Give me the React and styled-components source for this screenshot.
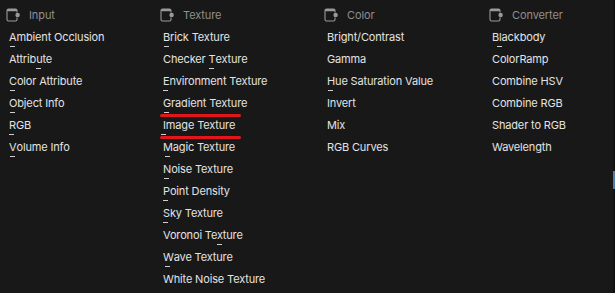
import React from "react";
import styled, { createGlobalStyle } from "styled-components";

const GlobalStyle = createGlobalStyle`
    html, body {
        margin: 0;
        padding: 0;
        background: #181818;
    }
    body {
        font-family: Inter, "DejaVu Sans", sans-serif;
        -webkit-font-smoothing: antialiased;
    }
`;

const columns = [
    {
        title: "Input",
        items: [
            ["Ambient Occlusion", 0],
            ["Attribute", 6],
            ["Color Attribute", 0],
            ["Object Info", 0],
            ["RGB", 0],
            ["Volume Info", 0],
        ],
    },
    {
        title: "Texture",
        items: [
            ["Brick Texture", 0],
            ["Checker Texture", 8],
            ["Environment Texture", 0],
            ["Gradient Texture", 0, true],
            ["Image Texture", 0, true],
            ["Magic Texture", 0],
            ["Noise Texture", 0],
            ["Point Density", 0],
            ["Sky Texture", 0],
            ["Voronoi Texture", 10],
            ["Wave Texture", 0],
            ["White Noise Texture", -1],
        ],
    },
    {
        title: "Color",
        items: [
            ["Bright/Contrast", -1],
            ["Gamma", -1],
            ["Hue Saturation Value", 0],
            ["Invert", -1],
            ["Mix", -1],
            ["RGB Curves", -1],
        ],
    },
    {
        title: "Converter",
        items: [
            ["Blackbody", 1],
            ["ColorRamp", -1],
            ["Combine HSV", -1],
            ["Combine RGB", -1],
            ["Shader to RGB", -1],
            ["Wavelength", -1],
        ],
    },
];

const CategoryIcon = () => (
    <svg width="15" height="14" viewBox="0 0 15 14">
        <path
            d="M11 4.6 V2.5 Q11 1 9.5 1 H2.5 Q1 1 1 2.5 V11.5 Q1 13 2.5 13 H9.5 Q11 13 11 11.5 V9.4"
            fill="none"
            stroke="#9a9a9a"
            strokeWidth="1.1"
        />
        <rect x="1" y="1" width="10" height="2.2" rx="1" fill="#9a9a9a" />
        <circle cx="11.6" cy="7" r="2.2" fill="#9a9a9a" />
    </svg>
);

const Label = ({ text, hotkey }) => {
    if (hotkey < 0) return text;
    return (
        <>
            {text.slice(0, hotkey)}
            <Hotkey>{text[hotkey]}</Hotkey>
            {text.slice(hotkey + 1)}
        </>
    );
};

const App = () => {
    return (
        <>
            <GlobalStyle />
            <Page>
                <Menu>
                    {columns.map((c) => (
                        <Column key={c.title}>
                            <Header>
                                <CategoryIcon />
                                <span>{c.title}</span>
                            </Header>
                            {c.items.map(([label, hotkey, marked]) => (
                                <Item key={label} $marked={marked}>
                                    <Label text={label} hotkey={hotkey} />
                                </Item>
                            ))}
                        </Column>
                    ))}
                </Menu>
                <Edge>
                    <EdgeHandle />
                </Edge>
            </Page>
        </>
    );
};

const Page = styled.div`
    display: flex;
    width: 615px;
    height: 293px;
    background: #181818;
    overflow: hidden;
`;

const Menu = styled.div`
    flex: 1;
    display: grid;
    grid-template-columns: 154px 164px 165px 1fr;
    align-items: start;
    padding: 4px 0 0 6px;
`;

const Column = styled.div`
    display: flex;
    flex-direction: column;
`;

const Header = styled.div`
    display: flex;
    align-items: center;
    gap: 8px;
    height: 22px;
    font-size: 11px;
    letter-spacing: -0.1px;
    color: #8f8f8f;
    svg {
        flex: none;
    }
`;

const Item = styled.div`
    position: relative;
    height: 22px;
    line-height: 23px;
    padding-left: 3px;
    font-size: 11px;
    letter-spacing: -0.15px;
    color: #e3e3e3;
    white-space: nowrap;

    &::after {
        content: "";
        display: ${(p) => (p.$marked ? "block" : "none")};
        position: absolute;
        left: 0;
        width: 81px;
        bottom: -3px;
        height: 3px;
        border-radius: 2px;
        background: #e0161b;
    }
`;

const Hotkey = styled.span`
    position: relative;
    &::after {
        content: "";
        position: absolute;
        left: 50%;
        bottom: -3px;
        width: 5px;
        margin-left: -3px;
        height: 1px;
        background: #cfcfcf;
    }
`;

const Edge = styled.div`
    width: 2px;
    flex: none;
    background: #111111;
    padding-top: 171px;
`;

const EdgeHandle = styled.div`
    height: 18px;
    background: #4f78b5;
`;

export default App;
